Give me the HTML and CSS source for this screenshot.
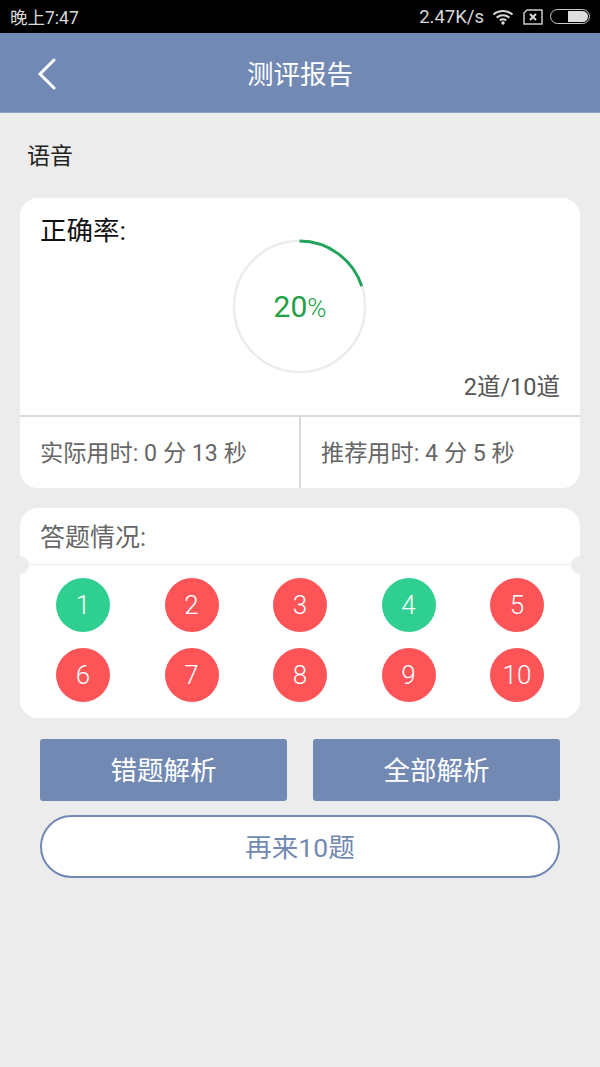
FILE: index.html
```html
<!DOCTYPE html>
<html lang="zh">
<head>
<meta charset="utf-8">
<title>测评报告</title>
<link rel="stylesheet" href="styles.css">
</head>
<body>
<div class="page">
  <div class="status">
    <span class="time">晚上7:47</span>
    <div class="status-right">
      <span class="speed">2.47K/s</span>
      <svg class="wifi" width="22" height="16" viewBox="0 0 22 16"><path d="M1.500 5.500C7 .8 15 .8 20.500 5.500" fill="none" stroke="#ddd" stroke-width="2"/><path d="M4.700 8.600c3.700-3 8.900-3 12.600 0" fill="none" stroke="#ddd" stroke-width="2"/><path d="M7.800 11.400c2-1.400 4.400-1.400 6.400 0" fill="none" stroke="#ddd" stroke-width="2"/><circle cx="11" cy="14" r="1.700" fill="#ddd"/></svg>
      <svg class="sim" width="20" height="16" viewBox="0 0 20 16"><path d="M4 1h15v14H1V4z" fill="none" stroke="#ccc" stroke-width="1.500"/><path d="M7 5l6 6M13 5l-6 6" stroke="#ddd" stroke-width="2"/></svg>
      <div class="battery"><div class="battery-fill"></div></div>
    </div>
  </div>
  <header class="nav">
    <svg class="back" width="22" height="32" viewBox="0 0 22 32"><path d="M18 2L4 16l14 14" fill="none" stroke="#fff" stroke-width="3" stroke-linecap="round" stroke-linejoin="miter"/></svg>
    <h1 class="title">测评报告</h1>
  </header>
  <div class="subject">语音</div>
  <section class="card result">
    <div class="result-top">
      <div class="rate-label">正确率:</div>
      <div class="ring">
        <svg width="136" height="140" viewBox="0 0 136 140"><circle cx="67.500" cy="69.500" r="65.500" fill="none" stroke="#ececec" stroke-width="2.500"/><path d="M67.500 4A65.500 65.500 0 0 1 129.800 49.300" fill="none" stroke="#22a45d" stroke-width="2.800"/></svg>
        <div class="ring-text">20<span class="pct">%</span></div>
      </div>
      <div class="count">2道/10道</div>
    </div>
    <div class="times">
      <div class="time-cell">实际用时: 0 分 13 秒</div>
      <div class="time-cell">推荐用时: 4 分 5 秒</div>
    </div>
  </section>
  <section class="card answers">
    <div class="answers-title">答题情况:</div>
    <div class="divider"></div>
    <div class="grid">
      <span class="dot ok">1</span><span class="dot bad">2</span><span class="dot bad">3</span><span class="dot ok">4</span><span class="dot bad">5</span>
      <span class="dot bad">6</span><span class="dot bad">7</span><span class="dot bad">8</span><span class="dot bad">9</span><span class="dot bad">10</span>
    </div>
  </section>
  <div class="actions">
    <button class="btn">错题解析</button>
    <button class="btn">全部解析</button>
  </div>
  <button class="again">再来10题</button>
</div>
</body>
</html>
```

FILE: styles.css
```css
* { box-sizing: border-box; }
html, body { margin: 0; padding: 0; }
body { font-family: Roboto, "Noto Sans CJK SC", sans-serif; background: #ececec; }
.page { width: 600px; height: 1067px; overflow: hidden; background: #ececec; display: flex; flex-direction: column; }
.status { height: 33px; background: #000; color: #d8d8d8; display: flex; align-items: center; justify-content: space-between; padding: 0 10px 0 10px; font-size: 17.500px; }
.speed { font-size: 18.500px; margin-right: 8px; }
.status-right { display: flex; align-items: center; }
.wifi { margin-right: 9px; }
.sim { margin-right: 7px; }
.battery { width: 40px; height: 15px; border: 1.500px solid #ccc; border-radius: 8px; display: flex; justify-content: flex-end; padding: 1px; }
.battery-fill { width: 20px; background: #ddd; border-radius: 0 6px 6px 0; }
.nav { height: 80px; background: #7189b3; display: flex; align-items: center; justify-content: center; position: relative; border-bottom: 1px solid #8ea2c4; }
.back { position: absolute; left: 36px; top: 25px; }
.title { margin: 0; font-size: 26.500px; font-weight: 400; color: #fff; }
.subject { height: 85px; padding: 29px 0 0 27px; font-size: 23px; line-height: 30px; color: #222; }
.card { margin: 0 20px; background: #fff; border-radius: 18px; }
.result { height: 290px; display: flex; flex-direction: column; }
.result-top { height: 219px; position: relative; border-bottom: 2px solid #d9d9d9; }
.rate-label { position: absolute; left: 20px; top: 16px; font-size: 26.500px; line-height: 34px; color: #111; }
.ring { position: absolute; left: 212px; top: 39px; width: 136px; height: 140px; }
.ring svg { display: block; }
.ring-text { position: absolute; left: 0; right: 0; top: 52px; text-align: center; color: #22a045; font-size: 30px; line-height: 36px; }
.pct { font-size: 26px; font-weight: 300; }
.count { position: absolute; right: 20px; top: 174px; font-size: 23.500px; line-height: 30px; color: #555; }
.times { flex: 1; display: flex; }
.time-cell { flex: 1; display: flex; align-items: center; padding: 0 0 3px 20px; font-size: 23.200px; color: #666; }
.time-cell + .time-cell { border-left: 2px solid #d9d9d9; }
.answers { height: 210px; margin-top: 20px; position: relative; }
.answers-title { height: 56px; padding: 13px 0 0 20px; font-size: 25px; line-height: 33px; color: #666; }
.divider { height: 1px; background: #ececec; }
.answers::before, .answers::after { content: ""; position: absolute; top: 48px; width: 18px; height: 18px; border-radius: 50%; background: #ececec; }
.answers::before { left: -9px; }
.answers::after { right: -9px; }
.grid { display: grid; grid-template-columns: repeat(5, 54px); justify-content: space-between; row-gap: 16px; padding: 13px 36px 0 36px; }
.dot { width: 54px; height: 54px; border-radius: 50%; color: #fff; font-size: 26px; font-weight: 300; display: flex; align-items: center; justify-content: center; }
.ok { background: #2fcf92; }
.bad { background: #fd5458; }
.actions { display: flex; justify-content: space-between; margin: 21px 40px 0; }
.btn { width: 247px; height: 62px; border: 0; border-radius: 3px; background: #7189b3; color: #fff; font: inherit; font-size: 26.500px; padding: 0 0 3px; }
.again { margin: 14px 40px 0; width: 520px; height: 63px; border: 2px solid #7189b3; border-radius: 32px; background: #fff; color: #7189b3; font: inherit; font-size: 26.500px; padding: 0 0 3px; }
```
